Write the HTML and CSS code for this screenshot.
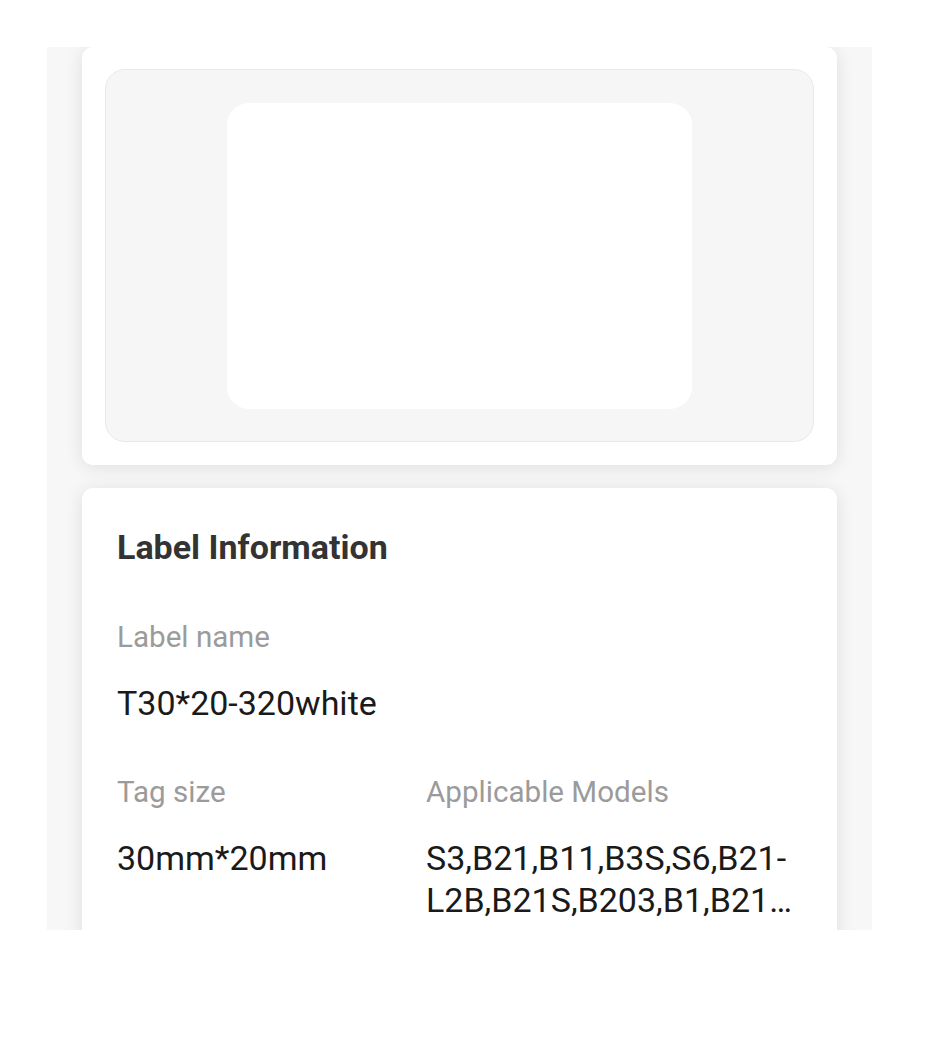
FILE: index.html
```html
<!DOCTYPE html>
<html lang="en">

<head>
    <meta charset="UTF-8">
    <meta name="viewport" content="width=device-width, initial-scale=1.0">
    <title>Label Details</title>
    <link rel="stylesheet" href="styles.css">
</head>

<body>
    <div class="panel">
        <div class="card preview-card">
            <div class="preview">
                <div class="label-paper"></div>
            </div>
        </div>
        <div class="card info-card">
            <h2 class="info-title">Label Information</h2>
            <div class="field">
                <div class="field-name">Label name</div>
                <div class="field-value">T30*20-320white</div>
            </div>
            <div class="field-row">
                <div class="field">
                    <div class="field-name">Tag size</div>
                    <div class="field-value">30mm*20mm</div>
                </div>
                <div class="field">
                    <div class="field-name">Applicable Models</div>
                    <div class="field-value models">S3,B21,B11,B3S,S6,B21-L2B,B21S,B203,B1,B21…</div>
                </div>
            </div>
        </div>
    </div>
</body>

</html>
```

FILE: styles.css
```css
body {
    margin: 0;
    padding: 47px;
    background-color: #fff;
    font-family: Roboto, "Noto Sans", sans-serif;
}

.panel {
    width: 825px;
    height: 883px;
    box-sizing: border-box;
    padding: 0 35px;
    background-color: #f7f7f7;
    overflow: hidden;
    display: flex;
    flex-direction: column;
    gap: 23px;
}

.card {
    background-color: #fff;
    border-radius: 11px;
    box-shadow: 0 2px 18px rgba(0, 0, 0, 0.1);
    flex-shrink: 0;
}

.preview-card {
    padding: 22px 23px 23px;
}

.preview {
    height: 373px;
    box-sizing: border-box;
    background-color: #f6f6f6;
    border: 1px solid #e9e9e9;
    border-radius: 20px;
    display: flex;
    align-items: center;
    justify-content: center;
}

.label-paper {
    width: 465px;
    height: 306px;
    background-color: #fff;
    border-radius: 22px;
}

.info-card {
    padding: 39px 35px 40px;
}

.info-title {
    margin: 0 0 52px;
    font-size: 34px;
    line-height: 40px;
    font-weight: 700;
    color: #333;
}

.field-name {
    font-size: 29.6px;
    line-height: 36px;
    color: #9b9b9b;
    margin-bottom: 27px;
}

.field-value {
    font-size: 34px;
    line-height: 42px;
    color: #1a1a1a;
}

.field-row {
    display: grid;
    grid-template-columns: 309px 1fr;
    margin-top: 50px;
}
```
